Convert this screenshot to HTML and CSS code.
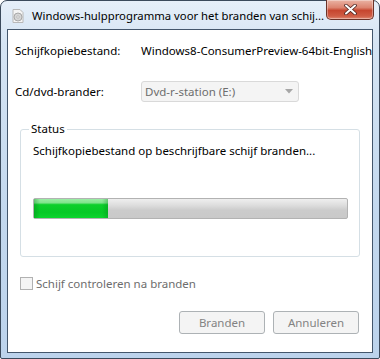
FILE: index.html
```html
<!DOCTYPE html>
<html>
<head>
  <meta name="viewport" content="width=device-width, initial-scale=1.0">
  <title>Windows-hulpprogramma voor het branden van schijfkopieën</title>
  <link rel="stylesheet" href="styles.css">
</head>
<body>
  <div class="window">
    <div class="titlebar">
      <svg class="app-icon" width="16" height="16" viewBox="0 0 16 16">
        <path d="M3 1.5h7l3 3v10H3z" fill="#f4f4f4" stroke="#b8b8b8"/>
        <circle cx="8" cy="9" r="4" fill="#d6d6d6" stroke="#9a9a9a" stroke-width="0.8"/>
        <circle cx="8" cy="9" r="1.2" fill="#ffffff" stroke="#9a9a9a" stroke-width="0.6"/>
      </svg>
      <span class="title">Windows-hulpprogramma voor het branden van schij...</span>
      <div class="close">
        <svg width="13" height="11" viewBox="0 0 13 11">
          <path d="M2 1.5l9 8M11 1.5l-9 8" stroke="#4a2420" stroke-width="3.6" stroke-linecap="round"/>
          <path d="M2 1.5l9 8M11 1.5l-9 8" stroke="#ffffff" stroke-width="2" stroke-linecap="round"/>
        </svg>
      </div>
    </div>

    <div class="client">
      <div class="row">
        <span class="label">Schijfkopiebestand:</span>
        <span class="value">Windows8-ConsumerPreview-64bit-English</span>
      </div>

      <div class="row row-drive">
        <span class="label">Cd/dvd-brander:</span>
        <div class="combo">
          <span>Dvd-r-station (E:)</span>
          <svg width="8" height="5" viewBox="0 0 8 5"><path d="M0 0h8L4 4.5z" fill="#a6a6a6"/></svg>
        </div>
      </div>

      <fieldset class="group">
        <legend>Status</legend>
        <p class="status-text">Schijfkopiebestand op beschrijfbare schijf branden...</p>
        <div class="progress">
          <div class="progress-fill" style="width: 74px"></div>
        </div>
      </fieldset>

      <label class="check">
        <span class="box"></span>
        Schijf controleren na branden
      </label>

      <div class="buttons">
        <button disabled>Branden</button>
        <button disabled>Annuleren</button>
      </div>
    </div>
  </div>
</body>
</html>
```

FILE: styles.css
```css
body {
  margin: 0;
  padding: 0;
  font-family: "Noto Sans", "Open Sans", sans-serif;
  font-size: 11.5px;
  color: #000;
}

.window {
  position: relative;
  width: 380px;
  height: 359px;
  box-sizing: border-box;
  border: 1px solid #3b4a5c;
  border-radius: 7px 7px 2px 2px;
  padding: 0 6px 5px 6px;
  background: linear-gradient(to bottom, #e6eff9 0%, #d5e4f3 12%, #c3d8ee 60%, #bcd3ec 100%);
  display: flex;
  flex-direction: column;
}

.titlebar {
  height: 28px;
  display: flex;
  align-items: center;
  padding-left: 3px;
}

.app-icon {
  margin-right: 6px;
  margin-top: 2px;
}

.title {
  white-space: nowrap;
  margin-top: 1px;
  font-size: 11.3px;
  color: #000;
}

.close {
  position: absolute;
  top: -1px;
  right: 5px;
  width: 46px;
  height: 19px;
  border: 1px solid #6b3329;
  border-top: none;
  border-radius: 0 0 5px 5px;
  background: linear-gradient(to bottom, #eab3a4 0%, #dc8470 40%, #c6462f 55%, #cf5d45 85%, #e08a73 100%);
  display: flex;
  align-items: center;
  justify-content: center;
  box-shadow: inset 0 0 0 1px rgba(255, 255, 255, 0.35);
}

.client {
  flex: 1;
  background: #fff;
  border: 1px solid #43566c;
  display: flex;
  flex-direction: column;
  overflow: hidden;
}

.row {
  display: flex;
  align-items: center;
  padding-left: 7px;
  margin-top: 13px;
  line-height: 16px;
  white-space: nowrap;
}

.row-drive {
  margin-top: 22px;
}

.label {
  width: 126px;
  flex-shrink: 0;
}

.value {
  white-space: nowrap;
}

.combo {
  width: 158px;
  height: 21px;
  box-sizing: border-box;
  border: 1px solid #d9d9d9;
  border-radius: 3px;
  background: #f4f4f4;
  color: #6d6d6d;
  display: flex;
  align-items: center;
  justify-content: space-between;
  padding: 0 5px 0 3px;
}

.group {
  margin: 19px 12px 0 12px;
  width: 340px;
  box-sizing: border-box;
  border: 1px solid #d5dfe5;
  border-radius: 3px;
  padding: 0 0 37px 12px;
}

.group legend {
  margin-left: -4px;
  padding: 0 2px;
  line-height: 16px;
}

.status-text {
  margin: 6px 0 0 0;
  line-height: 16px;
}

.progress {
  margin-top: 39px;
  width: 315px;
  height: 21px;
  box-sizing: border-box;
  border: 1px solid #b2b2b2;
  border-radius: 2px;
  background: linear-gradient(to bottom, #efefef 0%, #dcdcdc 35%, #cbcbcb 60%, #c9c9c9 100%);
}

.progress-fill {
  height: 100%;
  background:
    linear-gradient(to right, rgba(0, 120, 20, 0.35) 0, rgba(0, 120, 20, 0) 6px, rgba(0, 120, 20, 0) calc(100% - 6px), rgba(0, 120, 20, 0.3) 100%),
    linear-gradient(to bottom, #9ceda6 0%, #7fe48c 20%, #0dcf2c 30%, #06c826 70%, #0cd52e 100%);
}

.check {
  display: flex;
  align-items: center;
  margin: 20px 0 0 12px;
  color: #6d6d6d;
  line-height: 13px;
}

.box {
  width: 13px;
  height: 13px;
  box-sizing: border-box;
  border: 1px solid #b1b1b1;
  background: #f4f4f4;
  margin-right: 3px;
}

.buttons {
  display: flex;
  justify-content: flex-end;
  gap: 8px;
  margin-top: 21px;
  padding-right: 13px;
}

button {
  width: 86px;
  height: 23px;
  border: 1px solid #adb2b5;
  border-radius: 3px;
  background: #f4f4f4;
  color: #838383;
  font-family: "Noto Sans", "Open Sans", sans-serif;
  font-size: 11.5px;
  padding: 0;
}
```
